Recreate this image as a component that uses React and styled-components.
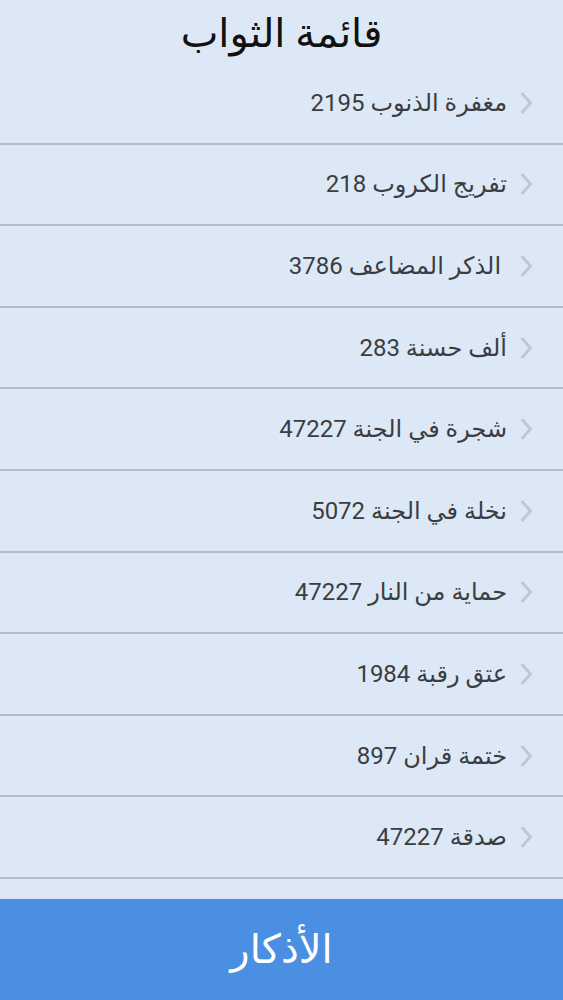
import styled, { createGlobalStyle } from "styled-components";

const rewards = [
    "مغفرة الذنوب 2195",
    "تفريج الكروب 218",
    "\u00A0الذكر المضاعف 3786",
    "ألف حسنة 283",
    "شجرة في الجنة 47227",
    "نخلة في الجنة 5072",
    "حماية من النار 47227",
    "عتق رقبة 1984",
    "ختمة قران 897",
    "صدقة 47227",
];

export default function App() {
    return (
        <>
            <GlobalStyle />
            <Screen>
                <Header>قائمة الثواب</Header>
                <List>
                    {rewards.map((label) => (
                        <Row key={label}>
                            <Chevron viewBox="0 0 13 22">
                                <path d="M2.5 2 L10.5 11 L2.5 20" />
                            </Chevron>
                            <Label>{label}</Label>
                        </Row>
                    ))}
                </List>
                <Footer>الأذكار</Footer>
            </Screen>
        </>
    );
}

const GlobalStyle = createGlobalStyle`
    html, body {
        margin: 0;
        padding: 0;
        background: #dde8f6;
    }
`;

const Screen = styled.div`
    width: 563px;
    height: 1000px;
    display: flex;
    flex-direction: column;
    background: #dde8f6;
    font-family: Roboto, "DejaVu Sans", sans-serif;
    overflow: hidden;
`;

const Header = styled.h1`
    margin: 0;
    height: 63px;
    flex-shrink: 0;
    display: flex;
    align-items: center;
    justify-content: center;
    padding-top: 4px;
    box-sizing: border-box;
    direction: rtl;
    font-size: 40px;
    font-weight: normal;
    color: #111;
`;

const List = styled.ul`
    flex: 1;
    margin: 0;
    padding: 0;
    list-style: none;
    overflow: hidden;
`;

const Row = styled.li`
    box-sizing: border-box;
    height: 81.6px;
    display: flex;
    align-items: center;
    gap: 13px;
    direction: rtl;
    padding-right: 30px;
    border-bottom: 2px solid #b6bdc4;
`;

const Chevron = styled.svg`
    width: 13px;
    height: 22px;
    flex-shrink: 0;
    fill: none;
    stroke: #c3c7cc;
    stroke-width: 3;
    stroke-linecap: round;
    stroke-linejoin: round;
`;

const Label = styled.span`
    font-size: 24px;
    color: #3a3d41;
    white-space: pre;
`;

const Footer = styled.div`
    height: 101px;
    flex-shrink: 0;
    display: flex;
    align-items: center;
    justify-content: center;
    background: #4a8fe2;
    color: #fff;
    font-size: 40px;
`;
